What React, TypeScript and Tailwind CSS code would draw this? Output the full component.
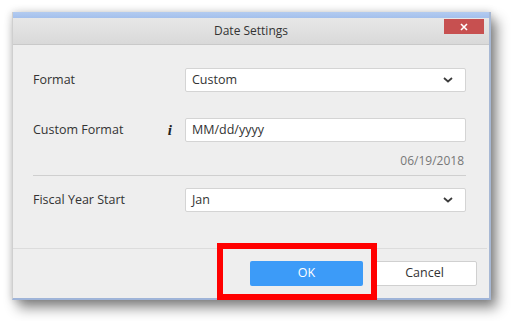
import React from "react";

/** Petite flèche des listes déroulantes */
const Chevron = () => (
  <svg width="10" height="6" viewBox="0 0 10 6" fill="none" className="shrink-0">
    <path d="M1 1l4 3.5L9 1" stroke="#3c3c3c" strokeWidth="1.8" />
  </svg>
);

type SelectProps = { value: string };

const FakeSelect = ({ value }: SelectProps) => (
  <div className="flex h-[24px] flex-1 items-center justify-between rounded-[2px] border border-[#d4d4d4] bg-white pl-[6px] pr-[12px] text-[12.5px] text-[#333]">
    <span>{value}</span>
    <Chevron />
  </div>
);

const Row = ({ label, children, info }: { label: string; children: React.ReactNode; info?: boolean }) => (
  <div className="flex items-center">
    <div className="flex w-[152px] shrink-0 items-center justify-between pr-[13px] text-[12.5px] text-[#333]">
      <span>{label}</span>
      {info && (
        <span className="font-['Liberation_Serif',serif] text-[15px] font-bold italic leading-none text-[#222]">i</span>
      )}
    </div>
    {children}
  </div>
);

export default function App() {
  return (
    <div className="relative min-h-screen bg-white pl-[12px] pt-[12px] font-['Open_Sans',sans-serif]">
      <div className="flex h-[288px] w-[479px] flex-col border-b-2 border-l border-r-2 border-b-[#9fb4d8] border-l-[#cfcfcf] border-r-[#a7b8d4] bg-[#eeeeee] shadow-[0_0_8px_rgba(0,0,0,0.18),6px_8px_12px_rgba(0,0,0,0.45)]">
        {/* bande bleue du cadre */}
        <div className="h-[6px] bg-gradient-to-b from-[#b3cbf0] to-[#a4c0ec]" />

        {/* barre de titre */}
        <div className="relative flex h-[27px] items-center justify-center border-b border-[#c9c9c9] bg-gradient-to-b from-[#e7e7e7] to-[#d9d9d9] text-[12px] text-[#333]">
          <span>Date Settings</span>
          <button
            type="button"
            className="absolute right-[5px] top-px flex h-[15px] w-[40px] items-center justify-center bg-[#c75050]"
          >
            <svg width="8" height="8" viewBox="0 0 8 8">
              <path d="M1 1l6 6M7 1L1 7" stroke="#fff" strokeWidth="1.6" />
            </svg>
          </button>
        </div>

        {/* contenu */}
        <div className="flex-1 pl-[20px] pr-[23px] pt-[23px]">
          <Row label="Format">
            <FakeSelect value="Custom" />
          </Row>

          <div className="mt-[26px]">
            <Row label="Custom Format" info>
              <div className="flex h-[24px] flex-1 items-center rounded-[2px] border border-[#d4d4d4] bg-white pl-[6px] text-[12.5px] text-[#333]">
                MM/dd/yyyy
              </div>
            </Row>
          </div>

          <div className="mt-[12px] flex h-[14px] items-center justify-end pr-[2px] text-[12px] text-[#777]">
            06/19/2018
          </div>

          <div className="mt-[7px] h-px bg-[#cfcfcf]" />

          <div className="mt-[12px]">
            <Row label="Fiscal Year Start">
              <FakeSelect value="Jan" />
            </Row>
          </div>
        </div>

        {/* pied */}
        <div className="mr-[2px] flex h-[50px] justify-end gap-[9px] border-t border-[#dcdcdc] pr-[10px] pt-[12px]">
          <button
            type="button"
            className="h-[25px] w-[113px] rounded-[2px] bg-[#3c9bf8] text-[12.5px] text-white"
          >
            OK
          </button>
          <button
            type="button"
            className="h-[25px] w-[105px] rounded-[2px] border border-[#d0d0d0] bg-white text-[12.5px] text-[#333]"
          >
            Cancel
          </button>
        </div>
      </div>

      {/* cadre rouge d'annotation */}
      <div className="absolute left-[217px] top-[243px] h-[57px] w-[160px] border-[6px] border-[#ff0000]" />
    </div>
  );
}
